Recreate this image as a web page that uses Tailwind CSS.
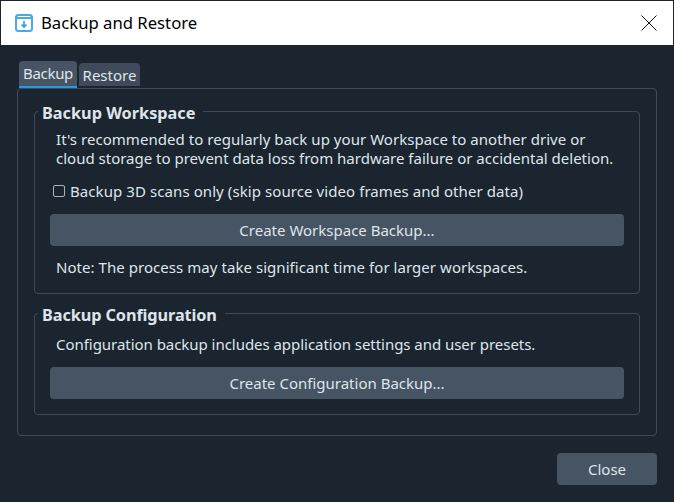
<!DOCTYPE html>
<html lang="en">

<head>
  <meta charset="UTF-8">
  <title>Backup and Restore</title>
  <script src="https://cdn.jsdelivr.net/npm/@tailwindcss/browser@4"></script>
</head>

<body class="w-[674px] h-[502px] overflow-hidden bg-[#1a2530] font-['Noto_Sans',sans-serif] text-[15px] text-[#dfe5ea]">
  <div class="h-[502px] flex flex-col border-x border-[#1a2530]">
    <!-- title bar -->
    <header class="mt-px h-[44px] shrink-0 bg-white text-black flex items-center pl-[14px] pr-[16px]">
      <svg class="w-[18px] h-[18px] mr-[8px]" viewBox="0 0 18 18" fill="none">
        <rect x="1" y="1" width="16" height="16" rx="2.5" stroke="#4aa8e8" stroke-width="2" />
        <path d="M1 4H17" stroke="#4aa8e8" stroke-width="2" />
        <path d="M9 7V12.5M6.5 10.5L9 13L11.5 10.5" stroke="#2f9be6" stroke-width="1.6" />
      </svg>
      <span class="text-[16.7px]">Backup and Restore</span>
      <svg class="ml-auto w-[16px] h-[16px]" viewBox="0 0 16 16" fill="none">
        <path d="M0.5 0.5L15.5 15.5M15.5 0.5L0.5 15.5" stroke="#111" stroke-width="1" />
      </svg>
    </header>

    <main class="flex-1 flex flex-col px-[16px]">
      <!-- tabs -->
      <div class="flex items-end gap-[2px] pl-[2px] mt-[16px] h-[27px]">
        <div class="w-[58px] h-[27px] bg-[#475464] rounded-t-[4px] border-b-2 border-[#2a96e0] text-center leading-[25px] tracking-[-0.3px]">Backup</div>
        <div class="w-[61px] h-[23px] mb-[2px] bg-[#3f4b5a] rounded-t-[4px] text-center leading-[24px]">Restore</div>
      </div>

      <!-- tab pane -->
      <section class="h-[348px] border border-[#3e4a5a] rounded-[4px] px-[16px] pt-[9px]">
        <fieldset class="h-[196px] border border-[#3e4a5a] rounded-[4px] px-[15px] block">
          <legend class="-ml-[12px] pl-[4px] pr-[8px] pt-[4px] text-[16.3px] font-bold leading-[22px]">Backup Workspace</legend>
          <p class="ml-[6px] mt-[6px] leading-[19px]"><span class="tracking-[0.04px]">It's recommended to regularly back up your Workspace to another drive or</span><br>cloud storage to prevent data loss from hardware failure or accidental deletion.</p>
          <label class="flex items-center mt-[13px] ml-[3px] h-[20px]">
            <span class="w-[12px] h-[12px] border border-[#aab2ba] rounded-[2px] mr-[5px]"></span>
            <span class="tracking-[0.08px]">Backup 3D scans only (skip source video frames and other data)</span>
          </label>
          <button class="mt-[13px] block w-full h-[32px] bg-[#475464] rounded-[4px] text-center">Create Workspace Backup...</button>
          <p class="ml-[6px] mt-[10px] leading-[22px] tracking-[0.05px]">Note: The process may take significant time for larger workspaces.</p>
        </fieldset>

        <fieldset class="mt-[6px] h-[115px] border border-[#3e4a5a] rounded-[4px] px-[15px] block">
          <legend class="-ml-[12px] pl-[4px] pr-[8px] pt-[4px] text-[16.3px] font-bold leading-[22px] tracking-[-0.1px]">Backup Configuration</legend>
          <p class="ml-[6px] mt-[8px] leading-[20px] tracking-[-0.04px]">Configuration backup includes application settings and user presets.</p>
          <button class="mt-[13px] block w-full h-[32px] bg-[#475464] rounded-[4px] text-center">Create Configuration Backup...</button>
        </fieldset>
      </section>

      <div class="flex justify-end mt-[17px]">
        <button class="w-[100px] h-[32px] bg-[#475464] rounded-[4px]">Close</button>
      </div>
    </main>
  </div>
</body>

</html>
